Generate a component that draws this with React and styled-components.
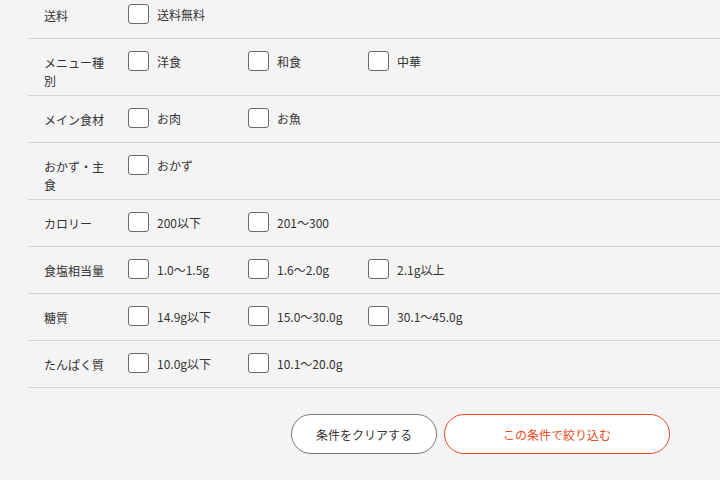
import React from 'react'
import styled, { createGlobalStyle } from 'styled-components'

const GlobalStyle = createGlobalStyle`
  html, body {
    margin: 0;
    padding: 0;
    background: #f4f4f4;
  }
  body {
    font-family: "Noto Sans CJK JP", "Noto Sans", sans-serif;
    color: #333;
    overflow: hidden;
  }
`

const filters = [
  { label: '送料', options: ['送料無料'] },
  { label: 'メニュー種別', options: ['洋食', '和食', '中華'] },
  { label: 'メイン食材', options: ['お肉', 'お魚'] },
  { label: 'おかず・主食', options: ['おかず'] },
  { label: 'カロリー', options: ['200以下', '201〜300'] },
  { label: '食塩相当量', options: ['1.0〜1.5g', '1.6〜2.0g', '2.1g以上'] },
  { label: '糖質', options: ['14.9g以下', '15.0〜30.0g', '30.1〜45.0g'] },
  { label: 'たんぱく質', options: ['10.0g以下', '10.1〜20.0g'] },
]

const App = () => {
  return (
    <>
      <GlobalStyle />
      <Wrapper>
        <FilterList>
          {filters.map((f) => (
            <Row key={f.label}>
              <Label>{f.label}</Label>
              <Options>
                {f.options.map((o) => (
                  <Option key={o}>
                    <Box type="checkbox" />
                    <span>{o}</span>
                  </Option>
                ))}
              </Options>
            </Row>
          ))}
        </FilterList>
        <Buttons>
          <Button>条件をクリアする</Button>
          <Button primary wide>この条件で絞り込む</Button>
        </Buttons>
      </Wrapper>
    </>
  )
}

const Wrapper = styled.div`
  margin-top: -8px;
  padding-left: 28px;
`

const FilterList = styled.div`
  display: flex;
  flex-direction: column;
`

const Row = styled.div`
  display: flex;
  align-items: flex-start;
  padding: 12px 0 5px 16px;
  border-bottom: 1px solid #d4d4d4;
`

const Label = styled.div`
  width: 68px;
  margin-right: 16px;
  padding-top: 3px;
  font-size: 12px;
  line-height: 18px;
  flex-shrink: 0;
`

const Options = styled.div`
  display: flex;
  flex-wrap: wrap;
`

const Option = styled.label`
  display: flex;
  align-items: center;
  width: 120px;
  height: 20px;
  margin-bottom: 9px;
  font-size: 12px;
  line-height: 18px;
  color: #333;

  span {
    margin-left: 8px;
    padding-top: 1px;
  }
`

const Box = styled.input`
  appearance: none;
  margin: 0;
  width: 21px;
  height: 20px;
  background: #fff;
  border: 1px solid #6a6a6a;
  border-radius: 3px;
  box-sizing: border-box;
`

const Buttons = styled.div`
  display: flex;
  justify-content: flex-end;
  gap: 7px;
  padding: 26px 50px 0 0;
`

const Button = styled.button`
  width: ${({ wide }) => (wide ? '226px' : '146px')};
  height: 40px;
  border-radius: 20px;
  background: #fff;
  border: 1px solid ${({ primary }) => (primary ? '#ea4a20' : '#777')};
  color: ${({ primary }) => (primary ? '#ea4a20' : '#333')};
  font-family: "Noto Sans CJK JP", "Noto Sans", sans-serif;
  font-size: 12px;
  cursor: pointer;
`

export default App
